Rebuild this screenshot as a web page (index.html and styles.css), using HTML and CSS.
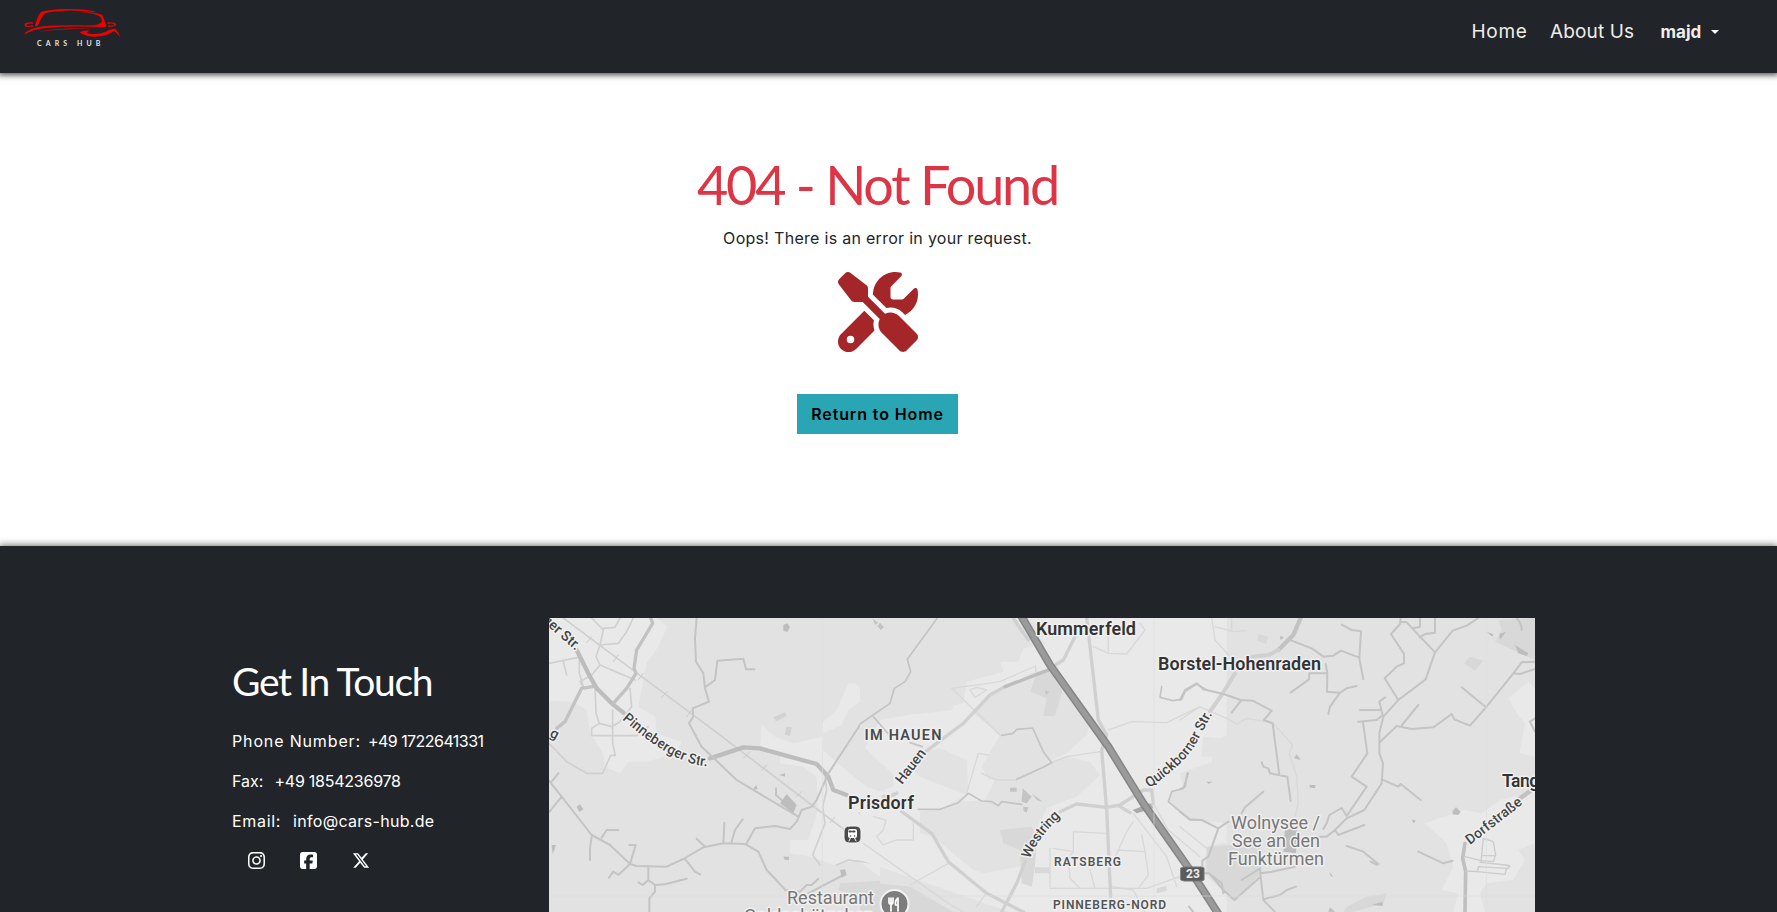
FILE: index.html
```html
<!DOCTYPE html>
<html lang="en">
<head>
<meta charset="utf-8">
<title>Cars Hub</title>
<link rel="stylesheet" href="styles.css">
</head>
<body>
<header class="navbar">
  <a class="brand" aria-label="Cars Hub">
    <svg class="brand-car" viewBox="72 24 290 90" fill="#f20000">
      <path d="M104 79 Q110 54 120 39 Q124 33 150 34 Q134 38 128 48 Q118 62 113 77Z"/>
      <path d="M122 36 Q150 28 200 27 Q262 27 290 37 Q240 31 195 32 Q150 34 128 41Z"/>
      <path d="M240 36 Q296 37 307 46 L319 79 L262 77 Q300 75 305 66 Q308 50 284 43 Q268 38 240 36Z"/>
      <path d="M72 104 Q84 84 130 79 Q200 73 318 78 L316 81 Q200 77 140 83 Q96 88 72 104Z"/>
      <path d="M116 95 Q170 82 284 85 Q190 87 116 95Z"/>
      <path d="M238 97 Q250 90 268 92 Q254 98 268 101 Q296 104 318 95 Q338 84 346 87 Q356 96 360 113 Q350 97 342 94 Q328 100 318 105 Q290 114 262 108 Q246 104 238 97Z"/>
      <path d="M102 79 Q72 84 73 74 Q74 66 98 67 L98 71 Q80 69 79 75 Q81 80 96 76Z M322 80 Q348 82 348 73 Q346 66 322 67 L322 71 Q342 69 342 74 Q340 78 326 76Z"/>
    </svg>
    <span class="brand-name">CARS HUB</span>
  </a>
  <nav class="nav-links">
    <a class="nav-home">Home</a>
    <a class="nav-about">About Us</a>
    <a class="nav-user">majd<span class="caret"></span></a>
  </nav>
</header>

<main class="error">
  <h1 class="error-title">404 - Not Found</h1>
  <p class="error-text">Oops! There is an error in your request.</p>
  <svg class="error-icon" viewBox="0 0 512 512" fill="#a52628"><path d="M78.600 5C69.100-2.400 55.600-1.500 47 7L7 47c-8.500 8.500-9.400 22-2.100 31.600l80 104c4.500 5.900 11.600 9.400 19 9.400h54.100l109 109c-14.700 29-10 65.400 14.300 89.600l112 112c12.500 12.500 32.800 12.500 45.300 0l64-64c12.500-12.500 12.500-32.800 0-45.300l-112-112c-24.200-24.200-60.600-29-89.600-14.300l-109-109V104c0-7.500-3.500-14.500-9.400-19L78.600 5zM19.900 396.100C7.200 408.800 0 426.100 0 444.100C0 481.600 30.400 512 67.900 512c18 0 35.300-7.200 48-19.900L233.700 374.300c-7.800-20.900-9-43.600-3.600-65.100l-61.700-61.700L19.900 396.100zM512 144c0-10.500-1.100-20.700-3.200-30.500c-2.400-11.200-16.100-14.100-24.200-6l-63.900 63.900c-3 3-7.100 4.700-11.300 4.700H352c-8.800 0-16-7.200-16-16V102.600c0-4.200 1.700-8.300 4.700-11.300l63.900-63.900c8.100-8.100 5.200-21.800-6-24.200C388.700 1.100 378.500 0 368 0C288.500 0 224 64.500 224 144l0 .8 85.300 85.300c36-9.100 75.800 .5 104 28.700L429 274.500c49-23 83-72.800 83-130.500zM56 432a24 24 0 1 1 48 0 24 24 0 1 1-48 0z"/></svg>
  <a class="home-button">Return to Home</a>
</main>

<footer class="footer">
  <section class="contact">
    <h2 class="contact-title">Get In Touch</h2>
    <p class="contact-row"><span class="l-phone">Phone Number:</span><span class="v-phone">+49 1722641331</span></p>
    <p class="contact-row"><span class="l-fax">Fax:</span><span class="v-fax">+49 1854236978</span></p>
    <p class="contact-row"><span class="l-mail">Email:</span><span class="v-mail">info@cars-hub.de</span></p>
    <div class="social">
      <svg class="ig" viewBox="0 32 448 448"><path d="M224.100 141c-63.600 0-114.900 51.300-114.900 114.900s51.300 114.900 114.900 114.900S339 319.500 339 255.900 287.700 141 224.100 141zm0 189.600c-41.100 0-74.700-33.500-74.700-74.700s33.500-74.700 74.700-74.700 74.700 33.500 74.700 74.700-33.600 74.700-74.700 74.700zm146.400-194.300c0 14.900-12 26.800-26.800 26.800-14.900 0-26.800-12-26.800-26.800s12-26.800 26.800-26.800 26.800 12 26.800 26.800zm76.100 27.200c-1.700-35.900-9.900-67.700-36.200-93.900-26.200-26.200-58-34.400-93.900-36.200-37-2.100-147.900-2.100-184.900 0-35.800 1.700-67.600 9.900-93.900 36.100s-34.400 58-36.200 93.900c-2.100 37-2.100 147.900 0 184.900 1.700 35.900 9.900 67.700 36.200 93.900s58 34.400 93.900 36.200c37 2.100 147.900 2.100 184.900 0 35.900-1.700 67.700-9.900 93.900-36.200 26.200-26.200 34.400-58 36.200-93.900 2.100-37 2.100-147.800 0-184.800zM398.800 388c-7.800 19.600-22.900 34.700-42.600 42.600-29.500 11.700-99.500 9-132.100 9s-102.700 2.600-132.100-9c-19.600-7.800-34.700-22.900-42.600-42.600-11.700-29.500-9-99.500-9-132.100s-2.600-102.700 9-132.100c7.800-19.600 22.900-34.700 42.600-42.600 29.500-11.700 99.500-9 132.100-9s102.700-2.600 132.100 9c19.600 7.800 34.700 22.900 42.600 42.600 11.700 29.500 9 99.500 9 132.100s2.700 102.700-9 132.100z"/></svg>
      <svg class="fb" viewBox="0 32 448 448"><path d="M64 32C28.700 32 0 60.700 0 96V416c0 35.300 28.700 64 64 64h98.200V334.200H109.400V256h52.800V222.300c0-87.100 39.400-127.500 125-127.500c16.200 0 44.200 3.200 55.700 6.400V172c-6-.6-16.500-1-29.600-1c-42 0-58.200 15.900-58.200 57.200V256h83.600l-14.400 78.200H255V480H384c35.300 0 64-28.700 64-64V96c0-35.300-28.700-64-64-64H64z"/></svg>
      <svg class="tx" viewBox="0 32 512 448"><path d="M389.200 48h70.600L305.600 224.200 487 464H345L233.700 318.600 106.500 464H35.800L200.700 275.500 26.800 48H172.400L272.900 180.900 389.200 48zM364.400 421.800h39.100L151.100 88h-42L364.400 421.800z"/></svg>
    </div>
  </section>

  <svg class="map" viewBox="549 618 986 294" fill="none" stroke-linejoin="round" stroke-linecap="round">
    <rect x="549" y="618" width="986" height="294" fill="#e2e2e2"/>
    <!-- western area -->
    <g transform="translate(540 610) scale(.33333)">
      <g fill="#e9e9e9">
        <path d="M27 24H350L382 50 355 110 320 160 295 290 345 320 350 370 425 395 410 430 320 455 265 455 240 490 195 470 190 430 150 370 140 300 100 275 27 272Z"/>
        <path d="M925 220 945 220 985 258 925 300 905 345 850 370 848 420 905 470 980 530 1020 545V800L950 750 880 765 815 740 750 730 750 690 805 690 835 600 830 500 790 470 720 460 720 430 660 410 665 345 705 380 760 400 845 380 845 340 890 300Z"/>
      </g>
      <path d="M900 820 1020 812V906H1010L960 870 895 840Z" fill="#d8d8d8"/>
      <g stroke="#d0d0d0" stroke-width="5">
        <path d="M70 24 285 185 520 360 815 585 1020 740"/>
        <path d="M155 24 190 60 180 105 168 140 180 165 155 195 120 215 130 232M190 55 225 52 240 24M180 105 235 100 260 65 280 24M180 165 285 210M27 160 115 142M70 155 80 195M118 130V190L130 230M165 230 168 310 178 340 155 355V377H290L325 350M178 340 215 350 240 335 275 290 270 235M218 300V400L226 436 212 436 188 490H140L80 455 27 400"/>
        <path d="M855 495 860 540 848 590 855 640 818 735 840 765M958 610 985 620 1020 625M890 765 925 750 1020 762"/>
      </g>
      <path d="M110 120 150 200 170 235 215 280 250 308M510 445 610 412 660 415 830 462 865 500 880 540 920 555" stroke="#bdbdbd" stroke-width="13"/>
      <path d="M332 24 338 40 290 120 282 175 288 190 260 235 220 280M50 355 75 335 125 235 158 230" stroke="#c2c2c2" stroke-width="10"/>
      <g stroke="#c4c4c4" stroke-width="6">
        <path d="M470 24 465 85 468 155 490 190 495 235 507 275 458 295 460 320 447 340 485 410 590 510 775 620M495 232 525 210 532 152 610 146 618 178H643"/>
        <path d="M1020 300 960 345 865 490 830 570 815 590 785 600 770 635 750 657 705 648 645 655 620 700M998 320 1020 345"/>
        <path d="M27 512 65 560 155 675 210 705 270 762 290 768 380 770 430 747 490 712 550 700 615 702 655 725 680 780 735 838M35 515 55 490M65 560 27 607M155 680 150 715V750M185 683 200 660H235M270 762 287 705H268M270 762 235 795 220 785 207 803M325 770V810L345 825 375 823 440 806M325 810 308 825 295 817M345 825V845L328 865V906M435 747 465 785 480 793M470 686 495 710M550 700 553 638M575 695 585 660 608 628M735 840 780 845 800 825 815 825 835 806M805 850 910 795M708 535V555L725 570"/>
      </g>
      <g fill="#bdbdbd"><path d="M740 552 770 585 760 610 720 580Z"/><path d="M730 45 742 40 750 52 742 66 730 62ZM900 780 915 778 920 795 905 803ZM110 590 120 583 130 598 118 606ZM35 705H48L38 733ZM640 538 648 524 653 538ZM718 495 735 490V500ZM730 740H747V750H735Z"/><path d="M700 322 735 307 740 318 708 334ZM738 350 755 352 750 378 735 374Z" fill="#d2d2d2"/></g>
      <g stroke="#c9c9c9" stroke-width="3"><path d="M220 155 235 135M295 210 310 190M365 262 382 245M440 320 455 300M610 445 630 425M665 482 680 465M770 560 785 545M870 638 884 622M970 712 985 697M140 98 155 80"/></g>
    </g>
    <!-- central area -->
    <g transform="translate(860 610) scale(.33333)">
      <path d="M445 24H1100V906H450L0 750V560L100 530 100 495 0 400V330L60 300 175 312 275 300 315 215 430 180 420 155 480 140 490 115 580 50Z" fill="#e9e9e9"/>
      <path d="M0 24H450L560 100 490 115 475 155 420 155 430 185 320 215 310 280 175 310 60 330 0 440Z" fill="#e2e2e2"/>
      <g fill="#e2e2e2"><path d="M0 400 100 495 70 545 0 515ZM185 430 240 415 320 450 325 540 300 575 375 570 405 510 520 465 620 440 690 455 720 495 650 560 560 595 500 720 480 770 370 790 340 780 220 680 180 670 180 605 240 598 320 555 180 500 145 470Z"/><path d="M385 265 510 190 590 170 690 330 680 375 620 430 570 450 480 505 385 510 365 470 420 375 340 310Z"/><path d="M960 490 1100 440V640L990 630 925 575 935 545 970 535Z"/></g>
      <g fill="#d8d8d8"><path d="M530 185 590 180 610 235 585 318H550L560 265 512 245ZM420 660 515 650 530 690 525 770 515 830 485 820 480 720 430 700Z"/><path d="M0 815 150 830 280 906H0Z"/><path d="M525 772H568V790H525ZM890 835 920 828V842L890 850Z"/></g>
      <g stroke="#d8d8d8" stroke-width="4"><path d="M275 235 420 215 527 168V185M275 235 420 375M330 240 345 262 380 240 350 232ZM320 550 355 430 385 435M365 490 410 510H470L500 495 570 460 620 440 720 425M745 360 815 335 920 338 1020 290M700 110 745 130 800 132 855 60 840 40M745 60V125M40 620 78 630 70 660 50 680 70 705 110 690 160 690V640M570 830V715M580 715 640 725M640 665V725L625 745 630 805 660 835M640 665 735 670M570 835H860L960 800M775 720 855 725 865 795 835 835M845 675 855 725M690 780 705 835M820 610 920 740 950 830M880 580 925 660 1020 740M150 825 265 760M350 890 375 855M820 635 800 665 775 720 755 760M755 830 820 840 855 906"/><path d="M10 700 265 880 310 906"/></g>
      <path d="M460 24 480 55 505 90M680 24 690 110 715 330 740 375 725 420 740 600 752 860M110 550 100 555M125 605 215 670 265 755 380 850 490 906M425 906 470 820 495 755M600 605 650 582 740 592 780 585 850 540 875 540 880 580 860 600M780 590 810 608" stroke="#d0d0d0" stroke-width="10"/>
      <path d="M110 550Q90 560 70 560M190 430 270 370 310 340 390 255 435 230M570 175 610 150 645 80" stroke="#d0d0d0" stroke-width="10"/>
      <path d="M435 230 570 178" stroke="#bdbdbd" stroke-width="10"/>
      <g stroke="#c4c4c4" stroke-width="5"><path d="M232 24 142 148 152 185 135 215 103 235 90 280 0 342M40 320 85 372M150 398 187 410M425 376 460 370 470 358 518 354 550 425 575 458 550 472 470 508M175 598H240L295 578 325 550 365 573 395 575 415 587 425 575 485 583M905 230 900 262 938 272 965 268 975 245 1010 222 1040 240M985 490 970 535 935 545 925 575 990 630H1020"/></g>
      <g fill="#c4c4c4"><path d="M488 535 515 560 500 580 485 575ZM450 533H470V545H450ZM515 550 548 575 530 570ZM490 590 505 592 500 608 490 602ZM60 38 72 52 62 60 52 48ZM38 26 55 38 45 45ZM555 240 568 246 558 254Z"/><path d="M818 600 870 580 880 595 830 610Z" fill="#aaa"/></g>
      <path d="M482 15 570 165 745 410 850 580 990 780 1100 950" stroke="#858585" stroke-width="24"/>
      <path d="M482 15 570 165 745 410 850 580 990 780 1100 950" stroke="#9b9b9b" stroke-width="15"/>
    </g>
    <!-- eastern area -->
    <g transform="translate(1180 610) scale(.33333)">
      <path d="M280 40 275 100 250 145 245 220 190 250 150 280 190 300 337 315 330 388 260 350 160 370 120 385 70 380 65 440 95 440 105 550 150 560 110 570 145 640 240 640 240 700 130 700 80 710 70 790 160 870 250 800 260 906H1065V24H275Z" fill="#e2e2e2"/>
      <g fill="#e9e9e9"><path d="M1045 215 1065 235V440L1018 430 1035 340 1010 310 985 265ZM1065 545V700L1015 720 1035 750 1000 810 920 820 900 850 915 906H820L835 850 785 840 820 770 800 700 735 640 850 600 905 610 960 570Z"/></g>
      <g fill="#d8d8d8"><path d="M955 30 1065 24V150L1010 125 945 95 965 60ZM235 72 265 80 258 102 232 92ZM870 140 910 152 885 182 852 160ZM80 710 240 700 245 790 165 872 80 790ZM500 890 560 860 620 850 610 880 520 906H490Z"/></g>
      <g stroke="#d8d8d8" stroke-width="4"><path d="M95 24 105 90 145 135M105 50 160 65 200 62M155 24V60M0 330 60 290 150 330 170 342 200 325 278 338 338 405 328 430 350 500 355 580 345 620M0 650 80 715"/></g>
      <path d="M362 24 340 75 295 120M1055 540 1020 565" stroke="#c2c2c2" stroke-width="13"/>
      <path d="M295 120 265 135 215 140M165 190 125 255 90 305" stroke="#d0d0d0" stroke-width="12"/>
      <path d="M855 700 848 745 857 785 855 906" stroke="#c0c0c0" stroke-width="11"/>
      <g stroke="#c4c4c4" stroke-width="6">
        <path d="M485 44 515 60 543 64 538 145 550 208M330 90 395 115 430 140 460 137 483 122 538 143M437 162 442 188 441 245 480 248 450 290 445 312M480 248 500 235 530 228M388 190H440M388 190 387 208 332 248"/>
        <path d="M662 24 660 42 633 72 672 132V160L650 170 614 205 655 270M660 35 680 37 765 127M720 24V50L700 55M765 24V68L735 72 720 82M895 24 860 47 818 62 765 127 750 170 737 208 655 270 610 320 598 370V430L609 460 605 520 553 600 500 625 465 660 440 680H410M598 398 650 348 695 357 760 352 815 312 823 328 870 347 918 292 1000 190 1025 157 1065 155M845 232 918 292M1000 190 1020 192 1065 177M666 345 715 285M535 335 590 330 608 315 598 275 615 262M540 300H600M549 337 562 430 515 500 560 530 500 618 485 594 448 615 440 640 430 657M605 508 655 530 662 522 722 570M465 660 475 675 553 645"/>
        <path d="M0 270 15 240 50 220 70 238 130 252 183 270 218 272 275 302 252 330 278 340 298 495M183 272 155 308M245 457 250 470 265 475 270 490 322 500 332 573M250 545 195 592 185 610M22 490 15 530 0 538M0 605 30 628 65 630 115 655 145 635M115 655 85 740 67 752V790L88 790 130 840 163 870 242 800 240 775 185 810M242 790 275 785 345 770M242 800 250 870 285 906M250 868 300 855 320 840 348 830M500 708 548 724 595 762M572 755 590 765M715 725 790 760 818 752M90 792 125 820 130 850M27 890 40 906M1065 325 1050 335 1065 365M1010 24Q1025 40 1025 60"/>
      </g>
      <g stroke="#cccccc" stroke-width="4"><path d="M910 685 940 695 947 735 940 755M910 685 903 755M855 740 903 752 940 755M905 737H945M857 783 895 785M895 770 980 775 975 793 893 785ZM900 757 978 765 990 768 978 780"/></g>
      <g fill="#bdbdbd"><path d="M818 603 828 592 842 605 835 615 818 613ZM342 445 350 433 362 450ZM388 525H407L405 535 390 533ZM695 628 708 632 700 640ZM1005 105 1045 130 1040 138 1015 130ZM960 90 958 72 978 65ZM920 65 940 73 937 80ZM445 905 450 892 465 906ZM575 885 608 875V888ZM80 515 98 515 85 522ZM300 78 312 82 302 90ZM448 785 460 800 452 798Z"/><path d="M315 655 350 660 348 730 310 725Z"/></g>
    </g>
    <path d="M822.500 618V912M1154 618V912M1486.500 618V912M549 896H1535" stroke="#dedede" stroke-width=".6"/>
    <!-- map labels -->
    <g class="map-label">
      <g class="town">
        <text x="1036" y="635" textLength="100">Kummerfeld</text>
        <text x="1158" y="670" textLength="163">Borstel-Hohenraden</text>
        <text x="848" y="809" textLength="66">Prisdorf</text>
        <text x="1502" y="787" textLength="46">Tangs</text>
      </g>
      <g class="district">
        <text x="864.500" y="740" textLength="77">IM HAUEN</text>
        <text class="small" x="1054" y="866" textLength="67">RATSBERG</text>
        <text class="small" x="1053" y="909" textLength="113">PINNEBERG-NORD</text>
      </g>
      <g class="place">
        <text x="1231" y="828.500" textLength="89">Wolnysee /</text>
        <text x="1232" y="847" textLength="88">See an den</text>
        <text x="1228" y="865" textLength="96">Funktürmen</text>
        <text x="787" y="904" textLength="87">Restaurant</text>
        <text x="744" y="922" textLength="130">Goldschätzchen</text>
      </g>
      <g class="street">
        <path id="st-a" d="M536 616 576 651"/><text><textPath href="#st-a">nger Str.</textPath></text>
        <path id="st-b" d="M622 719Q655 748 680 759T716 764"/><text><textPath href="#st-b" textLength="99">Pinneberger Str.</textPath></text>
        <text transform="translate(902 785) rotate(-52)" textLength="40">Hauen</text>
        <path id="st-c" d="M1030 859Q1036 840 1061 816"/><text><textPath href="#st-c" textLength="53">Westring</textPath></text>
        <path id="st-d" d="M1149 788Q1186 763 1197 742T1214 711"/><text><textPath href="#st-d" textLength="99">Quickborner Str.</textPath></text>
        <text transform="translate(1470 845) rotate(-38)" textLength="67">Dorfstraße</text>
        <text transform="translate(549 736) rotate(28)">g</text>
      </g>
    </g>
    <rect x="844" y="826" width="17" height="17" rx="5" fill="#4a4a4a" stroke="#f5f5f5"/>
    <rect x="848" y="829" width="9" height="9" rx="2" fill="#fff"/>
    <path d="M849 841 850.500 838M856 841 854.500 838" stroke="#fff"/>
    <path d="M849.500 831.500H855.500" stroke="#4a4a4a" stroke-width="2" stroke-dasharray="1.500 2"/>
    <circle cx="850.500" cy="836" r=".8" fill="#4a4a4a"/><circle cx="854.500" cy="836" r=".8" fill="#4a4a4a"/>
    <circle cx="894.500" cy="904" r="14" fill="#7d7d7d" stroke="#f3f3f3" stroke-width="2"/>
    <path d="M889 898V902Q889 904 891 904T893 902V898M891 898V911M898 911V898Q895 900 895.500 905H898" stroke="#fff" stroke-width="1.700"/>
    <path d="M1181 868 1184 867H1201L1204 868V880L1201 881H1184L1181 880Z" fill="#5c5c5c" stroke="#777"/>
    <text class="route" x="1186" y="878" textLength="14">23</text>
  </svg>
</footer>
</body>
</html>
```
FILE: styles.css
```css
* { box-sizing: border-box; }
html, body { margin: 0; height: 912px; overflow: hidden; }
body {
  display: flex;
  flex-direction: column;
  background: #fff;
  color: #212529;
  font-family: Inter, "Open Sans", sans-serif;
  font-size: 16px;
}

.navbar {
  flex: none;
  height: 73px;
  padding: 8px 58px 0 24px;
  display: flex;
  justify-content: space-between;
  align-items: flex-start;
  background: #212529;
  box-shadow: 0 0 6px 2px rgba(0, 0, 0, .700);
}
.brand { display: flex; flex-direction: column; width: 97px; }
.brand-car { width: 97px; height: 30px; }
.brand-name {
  margin: 1px 0 0 13px;
  color: #e4e4e4;
  font: 700 7px/9px Lato, sans-serif;
  letter-spacing: 4.100px;
  white-space: nowrap;
}
.nav-links {
  display: flex;
  align-items: center;
  height: 47px;
  color: #f0eeeb;
  white-space: nowrap;
}
.nav-home, .nav-about { font-size: 19px; }
.nav-home { width: 78.500px; letter-spacing: .700px; }
.nav-about { width: 110.500px; letter-spacing: .150px; }
.nav-user {
  width: 58.500px;
  display: flex;
  align-items: center;
  justify-content: space-between;
  font-size: 17px;
  font-weight: 700;
}
.caret {
  border: 4px solid transparent;
  border-top-color: #f8f9fa;
  border-bottom: 0;
}

.error {
  flex: none;
  height: 473px;
  padding: 78px 22px 0 0;
  display: flex;
  flex-direction: column;
  align-items: center;
  white-space: nowrap;
}
.error-title {
  margin: 0;
  color: #dc3545;
  font: 400 54px/67px Lato, sans-serif;
  letter-spacing: -2.250px;
}
.error-text { margin: 8px 0 0; line-height: 24px; letter-spacing: .290px; }
.error-icon { width: 80px; height: 80px; margin-top: 22px; }
.home-button {
  width: 161px;
  height: 40px;
  margin-top: 42px;
  background: #29a5b4;
  color: #000;
  font-weight: 600;
  line-height: 40px;
  text-align: center;
  letter-spacing: .880px;
}

.footer {
  flex: none;
  position: relative;
  height: 366px;
  padding: 72px 0 0 232px;
  display: flex;
  align-items: flex-start;
  background: #212529;
  color: #fff;
  box-shadow: 0 0 7px 1px rgba(0, 0, 0, .550);
}
.contact { width: 317px; padding-top: 37px; white-space: nowrap; }
.contact-title { margin: 0 0 22px; font: 400 39px/52px Lato, sans-serif; letter-spacing: -1.350px; }
.contact-row { display: flex; margin: 0 0 16px; line-height: 24px; }
.l-phone { width: 136px; letter-spacing: .850px; }
.l-fax { width: 42.500px; }
.l-mail { width: 61px; letter-spacing: .700px; }
.v-phone { letter-spacing: -.550px; }
.v-fax { letter-spacing: -.250px; }
.v-mail { letter-spacing: .320px; }
.social { display: flex; align-items: center; padding-left: 16px; margin-top: 1px; fill: #fff; }
.social svg { height: 17px; margin-top: 3px; }
.ig { width: 17px; }
.fb { width: 17px; margin-left: 35px; }
.tx { width: 18px; margin-left: 35px; }

.map { width: 986px; height: 294px; flex: none; }
.map-label text {
  font-family: Roboto, sans-serif;
  fill: #333;
  stroke: #f0f0f0;
  stroke-width: 3px;
  paint-order: stroke;
}
.map-label .town text { font-size: 18px; font-weight: 600; }
.map-label .district text { font-size: 14.500px; font-weight: 600; fill: #4a4a4a; }
.map-label .district .small { font-size: 12px; fill: #555; }
.map-label .place text { font-size: 18px; fill: #777; }
.map-label .street text { font-size: 14px; font-weight: 500; fill: #444; }
.map-label text.route, .route { font: 700 12px Roboto, sans-serif; fill: #eee; }
```
